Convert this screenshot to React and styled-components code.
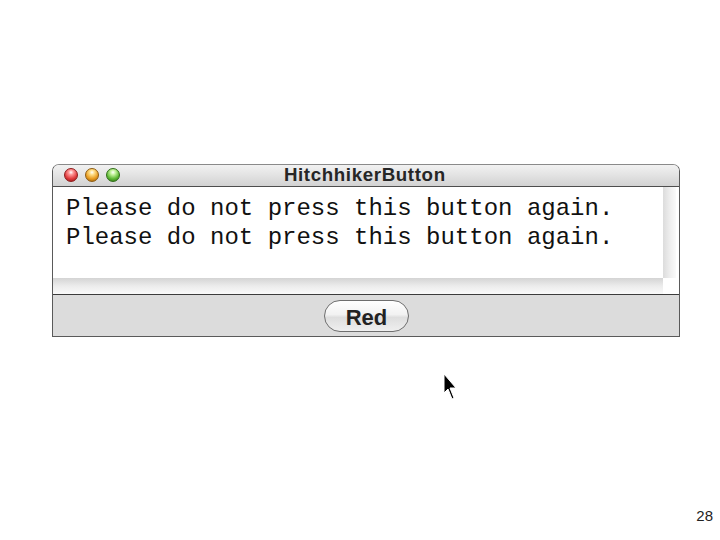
import React from 'react';
import styled, { createGlobalStyle } from 'styled-components';

const GlobalStyle = createGlobalStyle`
html, body {
  margin: 0;
  padding: 0;
  background: #ffffff;
  font-family: "Liberation Sans", Arial, sans-serif;
}
`;

const Page = styled.div`
position: relative;
width: 720px;
height: 540px;
display: flex;
flex-direction: column;
box-sizing: border-box;
padding: 164px 40px 16px 52px;
`;

const Window = styled.div`
width: 628px;
box-sizing: border-box;
border: 1px solid #5a5a5a;
border-top-color: #8a8a8a;
border-radius: 7px 7px 0 0;
overflow: hidden;
`;

const TitleBar = styled.div`
position: relative;
height: 21px;
display: flex;
align-items: center;
justify-content: center;
background: linear-gradient(#f2f2f2, #e4e4e4 45%, #d2d2d2);
border-bottom: 1px solid #4e4e4e;
`;

const Lights = styled.div`
position: absolute;
left: 11px;
top: 3px;
display: flex;
gap: 7px;
`;

const Light = styled.span`
width: 14px;
height: 14px;
border-radius: 50%;
box-sizing: border-box;
border: 1px solid ${(p) => p.$edge};
background: radial-gradient(circle at 50% 28%, #ffffff 0%, ${(p) => p.$hi} 22%, ${(p) => p.$base} 62%, ${(p) => p.$edge} 100%);
`;

const Title = styled.div`
font-weight: bold;
font-size: 18px;
letter-spacing: 0.6px;
transform: scaleX(1.04);
color: #262626;
margin-left: -2px;
`;

const TextRow = styled.div`
display: flex;
height: 91px;
`;

const TextArea = styled.div`
flex: 1;
background: #fff;
padding: 7px 0 0 13px;
font-family: "Liberation Mono", "Courier New", monospace;
font-size: 24px;
line-height: 29px;
color: #111;
white-space: pre;
`;

const VStrip = styled.div`
width: 13px;
background: linear-gradient(to right, #dcdcdc, #f0f0f0 60%, #fafafa);
border-right: 3px solid #fff;
`;

const HStripRow = styled.div`
display: flex;
height: 16px;
`;

const HStrip = styled.div`
flex: 1;
background: linear-gradient(#d4d4d4, #ececec 50%, #fafafa);
`;

const Corner = styled.div`
width: 16px;
background: #fff;
`;

const ButtonPanel = styled.div`
height: 42px;
background: #dcdcdc;
border-top: 1px solid #3c3c3c;
display: flex;
justify-content: center;
padding-top: 5px;
box-sizing: border-box;
`;

const PillButton = styled.button`
width: 85px;
height: 32px;
border-radius: 16px;
border: 1px solid #6e6e6e;
background: linear-gradient(#ffffff, #f2f2f2 45%, #dedede 55%, #efefef);
font-family: "Liberation Sans", Arial, sans-serif;
font-weight: bold;
font-size: 22px;
color: #222;
padding: 3px 0 0 0;
margin-left: 1px;
`;

const Footer = styled.div`
margin-top: auto;
display: flex;
justify-content: flex-end;
margin-right: -33px;
font-size: 15px;
color: #222;
`;

const Cursor = styled.svg`
position: absolute;
left: 443px;
top: 373px;
`;

const line = 'Please do not press this button again.';

export default function App() {
  return (
    <>
      <GlobalStyle />
      <Page>
        <Window>
          <TitleBar>
            <Lights>
              <Light $hi="#ff9a9a" $base="#e0383a" $edge="#8c1a1a" />
              <Light $hi="#ffe08a" $base="#e89a1c" $edge="#8c5a10" />
              <Light $hi="#c8f5a0" $base="#5cb832" $edge="#2e6c16" />
            </Lights>
            <Title>HitchhikerButton</Title>
          </TitleBar>
          <TextRow>
            <TextArea>{line + '\n' + line}</TextArea>
            <VStrip />
          </TextRow>
          <HStripRow>
            <HStrip />
            <Corner />
          </HStripRow>
          <ButtonPanel>
            <PillButton>Red</PillButton>
          </ButtonPanel>
        </Window>
        <Footer>28</Footer>
      </Page>
      <Cursor width="14" height="28" viewBox="0 0 14 28">
        <path d="M1 1 L1 20 L5 16 L9 26 L11 25 L7 15 L13 15 Z" fill="#000" stroke="#fff" strokeWidth="1" />
      </Cursor>
    </>
  );
}
